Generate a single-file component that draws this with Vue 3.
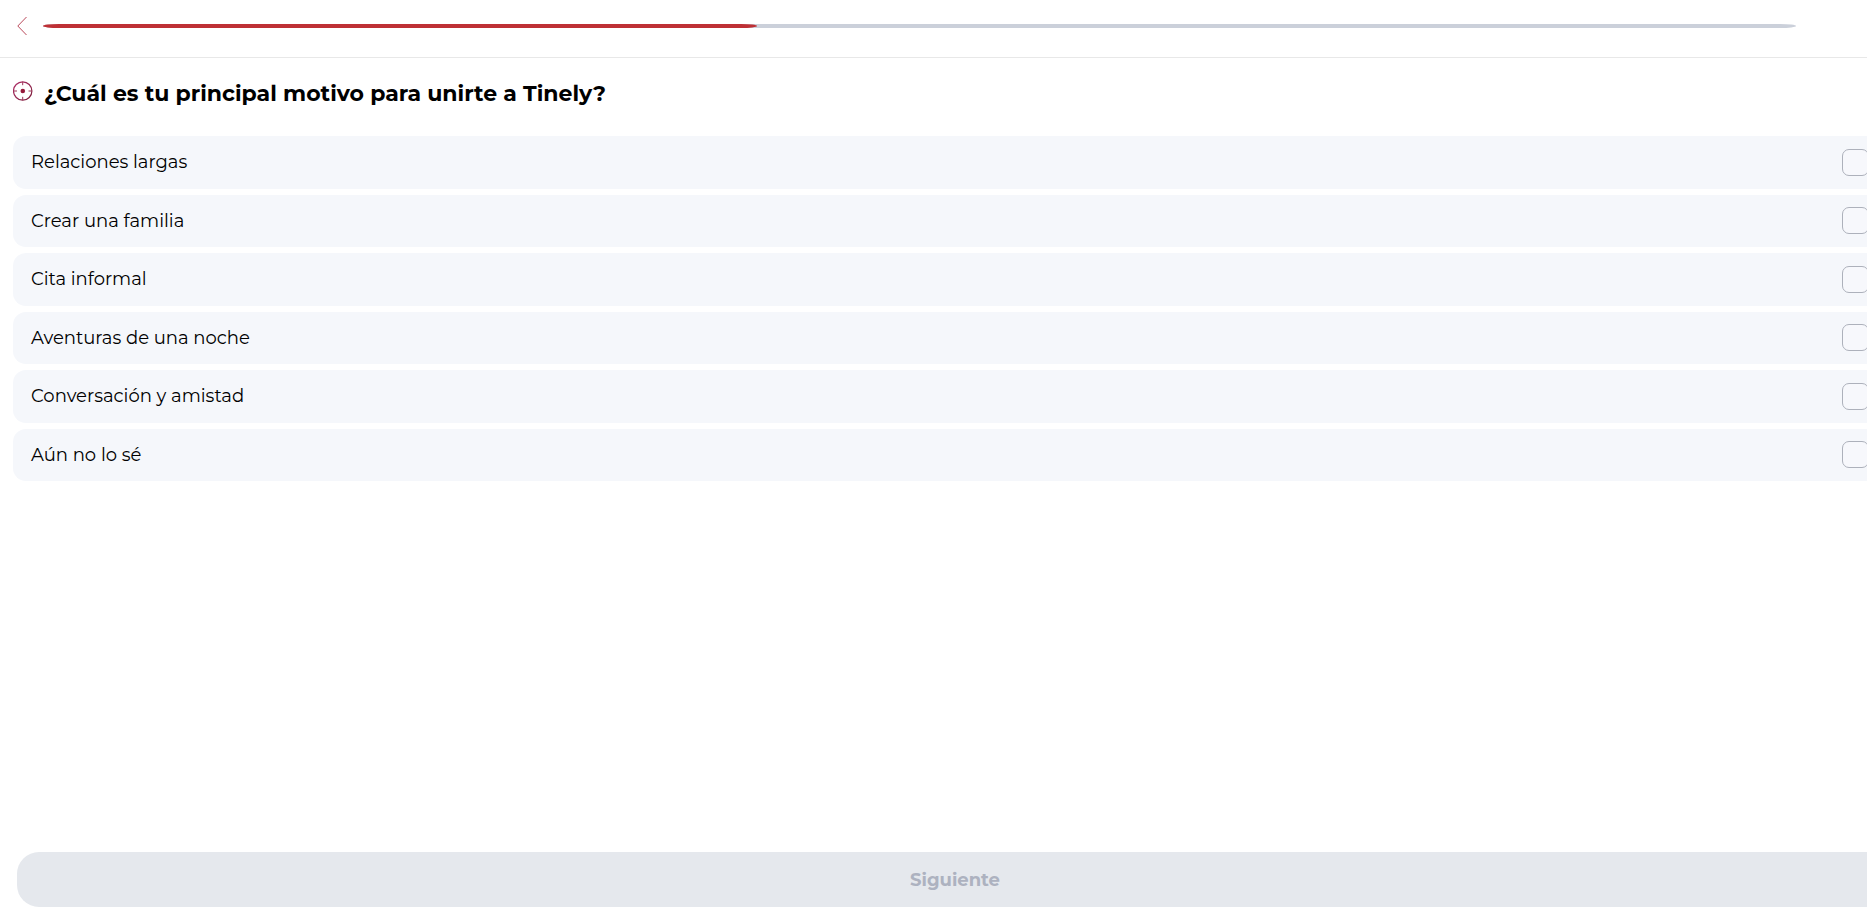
<script setup>
import { ref, computed } from 'vue'

const options = [
  'Relaciones largas',
  'Crear una familia',
  'Cita informal',
  'Aventuras de una noche',
  'Conversación y amistad',
  'Aún no lo sé',
]
const selected = ref([])
const step = ref(11)
const total = 27
const progress = computed(() => (step.value / total) * 100 + '%')
</script>

<template>
  <div class="viewport">
    <div class="page">
      <header class="header">
        <button class="back" type="button" aria-label="Atrás">
          <svg width="12" height="20" viewBox="0 0 12 20" fill="none">
            <path d="M9.5 1 L.8 10 L9.5 19" stroke="#b9485a" stroke-width="1" />
          </svg>
        </button>
        <div class="track" role="progressbar" aria-label="Progreso" :aria-valuenow="step" aria-valuemin="0" :aria-valuemax="total">
          <div class="fill" :style="{ width: progress }"></div>
        </div>
      </header>

      <main class="content">
        <div class="heading">
          <svg class="target" width="20" height="20" viewBox="0 0 20 20" fill="none" aria-hidden="true">
            <defs>
              <linearGradient id="ring" x1="0" y1="0" x2="1" y2="1">
                <stop offset="0" stop-color="#b0306a" />
                <stop offset="1" stop-color="#7a1c38" />
              </linearGradient>
            </defs>
            <circle cx="9.7" cy="10" r="9.2" stroke="url(#ring)" stroke-width="1.2" />
            <path d="M9.7 .8V4.2M9.7 15.8v3.4M.5 10H4M15.5 10h3.4" stroke="#9c3457" stroke-width="1" />
            <circle cx="9.8" cy="10" r="2.3" fill="#96193a" />
          </svg>
          <h1>¿Cuál es tu principal motivo para unirte a Tinely?</h1>
        </div>

        <div class="options">
          <label v-for="option in options" :key="option" class="option">
            <span>{{ option }}</span>
            <input v-model="selected" type="checkbox" :value="option" />
          </label>
        </div>
      </main>

      <footer class="footer">
        <button class="next" type="button" :disabled="!selected.length">Siguiente</button>
      </footer>
    </div>
  </div>
</template>

<style>
body {
  margin: 0;
  background: #fff;
}
</style>

<style scoped>
.viewport {
  overflow: hidden;
}

.page {
  display: flex;
  flex-direction: column;
  box-sizing: border-box;
  width: calc(100% + 43px);
  min-height: 100vh;
  font-family: Montserrat, Inter, "Liberation Sans", sans-serif;
  color: #000;
}

.header {
  display: flex;
  align-items: center;
  gap: 13px;
  height: 58px;
  box-sizing: border-box;
  padding: 0 114px 5px 17px;
  border-bottom: 1px solid #e8e8e8;
}

.back {
  display: flex;
  align-items: center;
  justify-content: flex-start;
  width: 13px;
  height: 32px;
  padding: 0;
  border: 0;
  background: none;
  cursor: pointer;
}

.back svg {
  flex: none;
}

.track {
  flex: 1;
  height: 4px;
  border-radius: 16px / 2px;
  background: #cbd0da;
}

.fill {
  height: 100%;
  border-radius: 16px / 2px;
  background: #be3035;
}

.content {
  flex: 1;
  padding: 20px 13px 0;
}

.heading {
  display: flex;
  align-items: flex-start;
  gap: 11px;
  margin-bottom: 26px;
}

.target {
  flex: none;
  margin-top: 3px;
}

h1 {
  margin: 0;
  font-size: 22px;
  font-weight: 700;
  line-height: 32px;
}

.options {
  display: grid;
  grid-auto-rows: 1fr;
  gap: 6px;
  min-height: 345px;
}

.option {
  display: flex;
  align-items: center;
  justify-content: space-between;
  padding: 0 28px 0 18px;
  border-radius: 13px;
  background: #f5f7fb;
  font-size: 18px;
  line-height: 24px;
  cursor: pointer;
}

.option input {
  appearance: none;
  box-sizing: border-box;
  width: 27px;
  height: 27px;
  margin: 0;
  border: 1px solid #adb1bb;
  border-radius: 7px;
  background: #f7f8fc;
}

.option input:checked {
  border-color: #be3035;
  background: #be3035;
}

.footer {
  padding: 0 17px 7px;
}

.next {
  display: block;
  width: 100%;
  height: 55px;
  border: 0;
  border-radius: 22px;
  background: #e5e8ed;
  color: #adb2c0;
  font-family: inherit;
  font-size: 18px;
  font-weight: 700;
}

.next:enabled {
  background: #be3035;
  color: #fff;
}
</style>
